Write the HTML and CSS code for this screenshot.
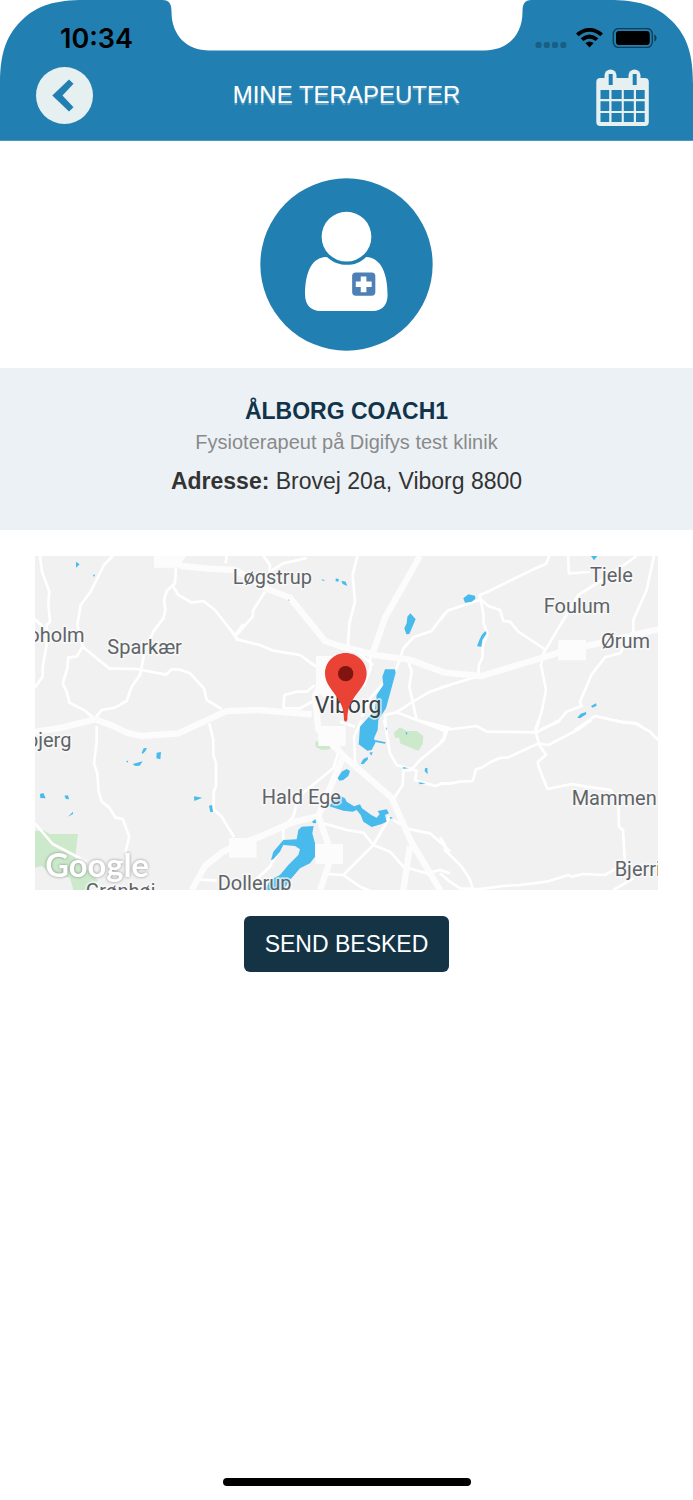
FILE: index.html
```html
<!DOCTYPE html>
<html lang="da">
<head>
    <meta charset="UTF-8">
    <meta name="viewport" content="width=device-width, initial-scale=1.0">
    <title>Mine terapeuter</title>
    <link rel="stylesheet" href="styles.css">
</head>
<body>
    <header class="header">
        <svg class="corner corner-left" viewBox="0 0 84 84" aria-hidden="true"><path d="M0 0H84C56 0 37 5 21 21C5 37 0 56 0 84Z"/></svg>
        <svg class="corner corner-right" viewBox="0 0 84 84" aria-hidden="true"><path d="M0 0H84C56 0 37 5 21 21C5 37 0 56 0 84Z"/></svg>
        <svg class="notch" viewBox="0 0 369 51" aria-hidden="true"><path d="M0 0C7 0 9 4 9 12C9 35 24 50.500 47 50.500H322C345 50.500 360 35 360 12C360 4 362 0 369 0Z"/></svg>

        <div class="statusbar">
            <span class="time">10:34</span>
            <svg class="status-icons" viewBox="535 28 122 20" aria-hidden="true">
                <g opacity=".25">
                    <rect x="535.500" y="42" width="6" height="6" rx="2"/>
                    <rect x="543.800" y="42" width="6" height="6" rx="2"/>
                    <rect x="552" y="42" width="6" height="6" rx="2"/>
                    <rect x="560.300" y="42" width="6" height="6" rx="2"/>
                </g>
                <path d="M576 33.500Q589.500 22.300 603 33.500L600.300 36.200Q589.500 27.500 578.700 36.200ZM580.600 38.200Q589.500 31 598.400 38.200L595.600 41Q589.500 36.300 583.400 41ZM585.300 43Q589.500 39.800 593.700 43L589.500 47.500Z"/>
                <rect x="613.300" y="28.500" width="39" height="19" rx="5.500" fill="none" stroke="#000" stroke-width="1.400" opacity=".5"/>
                <rect x="616" y="31" width="33.700" height="14" rx="3"/>
                <path d="M654.300 34.500C657.300 35.700 657.300 40.300 654.300 41.500Z" opacity=".5"/>
            </svg>
        </div>

        <nav class="navbar">
            <button class="icon-btn back" type="button" aria-label="Tilbage">
                <svg viewBox="36 67 57 57"><path d="M69 79.500L73.500 83.800L62.500 95.500L73.500 107.200L69 111.500L52.300 95.500Z"/></svg>
            </button>
            <h1>MINE TERAPEUTER</h1>
            <button class="icon-btn calendar" type="button" aria-label="Kalender">
                <svg viewBox="596 64 54 62">
                    <rect x="596.300" y="78" width="52.500" height="48" rx="4"/>
                    <rect x="604.500" y="69.500" width="12" height="17" rx="6"/>
                    <rect x="628.500" y="69.500" width="12" height="17" rx="6"/>
                    <path class="cutout" d="M608.700 74h4v11h-4zM632.700 74h4v11h-4z"/>
                    <path class="cutout" d="M600.500 90h8.700v9h-8.700zM611.500 90h10.200v9h-10.200zM623.800 90h10v9h-10zM636 90h8.700v9h-8.700zM600.500 101.300h8.700v9.700h-8.700zM611.500 101.300h10.200v9.700h-10.200zM623.800 101.300h10v9.700h-10zM636 101.300h8.700v9.700h-8.700zM600.500 113h8.700v9h-8.700zM611.500 113h10.200v9h-10.200zM623.800 113h10v9h-10zM636 113h8.700v9h-8.700z"/>
                </svg>
            </button>
        </nav>
    </header>

    <main>
        <div class="avatar">
            <svg viewBox="30 37 520 522" role="img" aria-label="Terapeut">
                <circle class="avatar-bg" cx="290" cy="298" r="260"/>
                <path fill="#fff" d="M225 275C180 280 165 330 165 390C165 420 184 438 210 438H370C397 438 414 420 414 390C414 330 397 277 349 275C318 307 265 307 232 276Z"/>
                <circle cx="290" cy="214" r="75" fill="#fff"/>
                <rect x="307" y="322" width="70" height="70" rx="11" fill="#4f80b5"/>
                <path fill="#fff" d="M333 334h17v15h16v17h-16v16h-17v-16h-15v-17h15z"/>
            </svg>
        </div>

        <section class="info">
            <h2>ÅLBORG COACH1</h2>
            <p class="role">Fysioterapeut på Digifys test klinik</p>
            <p class="address"><strong>Adresse:</strong> Brovej 20a, Viborg 8800</p>
        </section>

        <!-- map is drawn in six tiles, each group has its own origin -->
        <svg class="map" viewBox="0 0 1869 1002" role="img" aria-label="Kort over Viborg">
            <g class="park">
                <path d="M0 825L25 822L44 834L129 834L120 905L170 955L190 975L165 985L155 1002H115L105 965L45 950L20 930L0 935Z"/>
                <path d="M840 560L850 553L885 570V580L860 582L843 574Z"/>
                <path d="M1077 530L1095 514L1115 525L1145 525L1165 540L1163 565L1150 585L1120 572L1095 562L1093 545L1080 545Z"/>
            </g>
            <g class="road">
                <g transform="translate(-15 -18)">
                    <path d="M30 18L36 65L58 125L55 160L60 215L50 225L50 285L38 350L38 380L15 412M248 18L222 45L182 125L152 165L142 225L158 290L200 325L238 355L320 357L408 374L425 358L445 358L480 370L522 415L530 450L575 477M15 208L60 250M158 290L140 320L115 322L112 355L98 400L110 425L118 458L165 482L200 512M438 52L435 100L410 123L402 150L406 180L400 205L370 245L345 300L330 375L305 410L290 453L255 473L215 480L195 505M430 110L445 135L485 158L520 153L555 180L590 225L625 270M590 18L587 40M615 255L640 222"/>
                </g>
                <g transform="translate(585 -18)">
                    <path d="M100 18L120 45L118 70M120 65L160 40L230 24M105 125L70 180L68 200L18 257M0 235L20 268L90 285L130 302L210 315L258 350M382 18L368 75L375 155L358 220L354 285L430 345M660 178L640 195L605 243L550 262L520 295L505 340L500 355L470 390L420 445L395 500M420 320L422 355L400 410M535 335L545 365L538 410L560 510M660 405L600 425L540 460L500 487L465 495L467 530M500 487L560 510L660 535M160 475L163 435L200 425L230 425L255 405M160 475L210 475L255 450"/>
                </g>
                <g transform="translate(1215 -18)">
                    <path d="M328 18L318 42L280 58L150 122L120 135L118 150L22 182L0 212M120 140L130 190L131 220L142 250L128 290L128 320L117 345L115 375M125 150L145 168L180 180L190 213L210 215L235 245L318 300M384 18L387 70L450 66M590 18L510 75L415 135L310 310L303 345L318 420L304 490L285 540M642 18L620 120L580 210V245L540 310L495 322L455 373L420 455L425 468L380 485L355 515L300 540M405 540L465 498L540 515L590 520L620 540M0 413L110 380"/>
                </g>
                <g transform="translate(-15 492)">
                    <path d="M200 18V65L192 130L202 160L206 215L215 245L237 262L257 293L278 297L298 350L288 390L282 430M15 310L68 372L170 425M538 10L550 60V105L558 130V200L551 215V268L575 290L612 352M500 478L560 482"/>
                </g>
                <g transform="translate(585 492)">
                    <path d="M395 0L372 50L375 120L385 150M330 80L310 145L205 230L190 290L160 320V370L120 440L60 495M462 0L470 40L480 100L500 135L560 152L555 180L615 198L640 190L660 190M543 150L570 120L640 62L650 35L600 15L560 0M545 150L520 152L518 195L485 245M265 305L350 330L400 338L430 375L480 395L520 440L590 460L630 450L660 460M480 290L430 375L340 465L295 462M340 465L390 500L420 512M490 300L540 328L600 340L640 375L660 395M330 5L375 20M0 330L12 350"/>
                </g>
                <g transform="translate(1215 492)">
                    <path d="M0 20L15 30L12 55L0 65M15 30L110 18L140 35L290 37L360 0M455 0L415 28L325 75L295 70L205 112L180 114L150 127L125 143L108 148L98 183L60 185L30 191L0 190M298 0L287 35L298 75L318 104L294 125L295 138L322 207L395 192L440 200L512 210L535 250L537 320L549 330L555 430L495 465L430 462L395 470L385 465L320 485L240 495L190 498L120 507L60 505L30 485L0 460M0 352L15 375V390L65 440L88 475L100 510M520 510L580 475M520 0L555 8L585 10L630 35L654 60"/>
                </g>
            </g>
            <g class="highway">
                <path d="M0 528L80 515L180 490L235 510L275 530L320 540L430 532L575 465L670 462L830 475"/>
                <path d="M410 15L440 30L520 38L600 42L660 75L700 100L765 125L870 255L920 272L1025 298L1120 310L1230 350L1340 360L1570 290L1869 220"/>
                <path d="M1155 0L1050 185L1010 300M470 1002L510 930L560 890L600 870L680 840L770 800L850 780L925 600L1070 725L1130 860L1220 1010M850 780L880 865V930L855 1002M1125 870L1105 1002M870 360L840 420L850 520L925 600"/>
            </g>
            <g class="town">
                <path d="M357 0H453L440 20L420 35H357Z"/>
                <path d="M843 300H960V440H880L843 400Z"/>
                <path d="M850 510H932V570H850ZM582 846H665V905H582ZM841 864H924V924H841ZM1570 252H1653V313H1570Z"/>
            </g>
            <g class="water">
                <g transform="translate(-15 -18)"><path d="M138 35L149 43L138 53ZM188 77L195 72L193 80Z"/></g>
                <g transform="translate(585 -18)">
                    <path d="M273 88L285 90L280 93ZM317 85L327 88L325 95L317 94ZM334 92L347 95L352 108L338 102ZM175 148L179 152L174 151ZM541 190L557 208L538 252L529 253L523 235L530 220L532 200Z"/>
                    <path d="M465 358H495L497 368L468 475L445 510L443 540L432 565L437 577L425 600L412 602L386 583L390 530L410 508L435 480L440 435L460 405L457 380Z"/>
                </g>
                <g transform="translate(1215 -18)"><path d="M70 145L85 133L105 137L106 147L95 155L75 158ZM136 243L140 250L127 270L124 290L111 289L118 270L125 255ZM453 18H472L462 31ZM412 503L422 491L438 486L439 493L420 505ZM453 468L468 460L470 467L457 473Z"/></g>
                <g transform="translate(-15 492)"><path d="M335 98L341 85L351 84L347 92L338 102ZM380 98L393 96L391 118L379 115ZM288 123L295 122L293 128ZM308 132L338 124L329 137L316 138ZM30 222L40 219L47 235L31 234ZM103 227L114 226L117 238L108 237ZM114 290L129 275V282ZM492 229L517 233L493 243ZM537 257L546 255L549 275L541 277Z"/></g>
                <g transform="translate(585 492)">
                    <path d="M435 60L467 67L465 71L436 66ZM418 98L428 96L424 107ZM392 131L400 117L413 111L414 118L400 133ZM323 174L335 155L350 147L360 153L355 168L340 180L328 182ZM585 145L592 143L593 163L584 154ZM565 187L588 190L570 193ZM518 141L537 145L520 146ZM527 35L533 40L528 45ZM467 20L471 27L468 30Z"/>
                    <path d="M295 258L315 240L325 225L345 235L350 245L372 259L390 253L396 265L425 286L440 293L449 282L443 273L470 268L477 280L465 285L470 305L455 312L425 321L400 305L392 285L380 270L368 275L340 272ZM478 292L488 291L482 298ZM246 305L256 297L259 309L250 310Z"/>
                    <path d="M215 320L251 318L247 340L255 370V410L240 430L210 445L180 480L160 510H105L120 480L150 465L175 435L205 405L210 388L195 378L160 375L150 395L130 418L123 420L130 395L160 360L200 358L205 330Z"/>
                </g>
            </g>
            <g class="labels">
                <text x="593" y="84">Løgstrup</text>
                <text x="1665" y="79">Tjele</text>
                <text x="1526" y="172">Foulum</text>
                <text x="1698" y="277">Ørum</text>
                <text x="-20" y="257">oholm</text>
                <text x="217" y="294">Sparkær</text>
                <text x="-24" y="573">bjerg</text>
                <text x="680" y="744">Hald Ege</text>
                <text x="1610" y="746">Mammen</text>
                <text x="548" y="1003">Dollerup</text>
                <text x="1739" y="960">Bjerring</text>
                <text x="152" y="1025">Grønhøj</text>
                <text class="city" x="839" y="470">Viborg</text>
            </g>
            <text class="google" x="31" y="964">Google</text>
            <g transform="translate(585 -18)">
                <path fill="#ea4335" d="M347 309C312 309 285 336 285 371C285 401 309 421 326 450C340 473 341 486 342 510Q347 520 352 510C353 486 354 473 368 450C385 421 410 401 410 371C410 336 382 309 347 309Z"/>
                <circle cx="347" cy="371" r="23" fill="#7f1410"/>
            </g>
        </svg>

        <button class="btn" type="button">SEND BESKED</button>
    </main>

    <div class="home-indicator"></div>
</body>
</html>
```
FILE: styles.css
```css
* {
    box-sizing: border-box;
}
body {
    margin: 0;
    min-height: 100vh;
    display: flex;
    flex-direction: column;
    background: #fff;
    color: #333;
    font-family: "Liberation Sans", Arial, sans-serif;
}
h1, h2, p {
    margin: 0;
}
button {
    font-family: inherit;
    border: none;
    cursor: pointer;
}
svg {
    display: block;
}

/* Header */
.header {
    position: relative;
    background: #227fb2;
    border-bottom: 1px solid #4c97bf;
}
.corner {
    position: absolute;
    top: 0;
    width: 84px;
    fill: #fff;
}
.corner-left {
    left: 0;
}
.corner-right {
    right: 0;
    transform: scaleX(-1);
}
.notch {
    position: absolute;
    top: 0;
    left: 50%;
    width: 369px;
    transform: translateX(-50%);
    fill: #fff;
}
.statusbar {
    display: flex;
    justify-content: space-between;
    align-items: center;
    height: 60px;
    padding: 16px 36px 0 60px;
}
.time {
    font-family: Inter, sans-serif;
    font-size: 27px;
    font-weight: 600;
    color: #000;
}
.status-icons {
    width: 122px;
    height: 20px;
}
.navbar {
    display: flex;
    justify-content: space-between;
    align-items: center;
    height: 80px;
    padding: 0 43px 10px 36px;
}
.navbar h1 {
    padding-left: 4px;
    font-size: 24px;
    font-weight: normal;
    color: #fff;
    text-shadow: 0 2px 1px rgba(255, 255, 255, 0.3);
}
.icon-btn {
    padding: 0;
    background: none;
}
.back {
    width: 57px;
    height: 57px;
    border-radius: 50%;
    background: #e6f0f1;
    fill: #227fb2;
}
.calendar {
    width: 54px;
    height: 62px;
    fill: #e6f0f1;
}
.cutout {
    fill: #227fb2;
}

/* Therapist */
main {
    display: flex;
    flex-direction: column;
}
.avatar {
    padding: 37px 0 17px;
}
.avatar svg {
    width: 173px;
    height: 173px;
    margin: 0 auto;
}
.avatar-bg {
    fill: #227fb2;
}
.info {
    padding: 28px 20px 32px;
    background: #ecf1f6;
    text-align: center;
}
.info h2 {
    font-size: 23px;
    line-height: 30px;
    color: #12344a;
}
.role {
    font-size: 20px;
    line-height: 32px;
    color: #8a8a8a;
}
.address {
    margin-top: 6px;
    font-size: 23px;
    line-height: 34px;
}

/* Map */
.map {
    width: calc(100% - 70px);
    margin: 26px 35px;
    background: #f1f1f1;
    overflow: hidden;
}
.park {
    fill: #cde9cc;
}
.road,
.highway {
    fill: none;
    stroke: #fff;
    stroke-width: 8;
    stroke-linejoin: round;
}
.highway {
    stroke: #fcfcfc;
    stroke-width: 19;
}
.town {
    fill: #fcfcfc;
}
.water {
    fill: #48bbec;
}
.labels {
    font-family: Roboto, sans-serif;
    font-size: 60px;
    fill: #5f6468;
    stroke: #fafafa;
    stroke-opacity: 0.7;
    stroke-width: 10;
    stroke-linejoin: round;
    paint-order: stroke;
}
.city {
    font-size: 69px;
    fill: #3c4043;
}
.google {
    font-family: Lato, sans-serif;
    font-size: 98px;
    font-weight: bold;
    fill: #fff;
    filter: drop-shadow(0 0 5px rgba(0, 0, 0, 0.4));
}

.btn {
    align-self: center;
    padding: 0 21px;
    border-radius: 6px;
    background: #143446;
    color: #fff;
    font-size: 23px;
    line-height: 56px;
}

.home-indicator {
    width: 248px;
    height: 8px;
    margin: auto auto 14px;
    border-radius: 4px;
    background: #000;
}
```
